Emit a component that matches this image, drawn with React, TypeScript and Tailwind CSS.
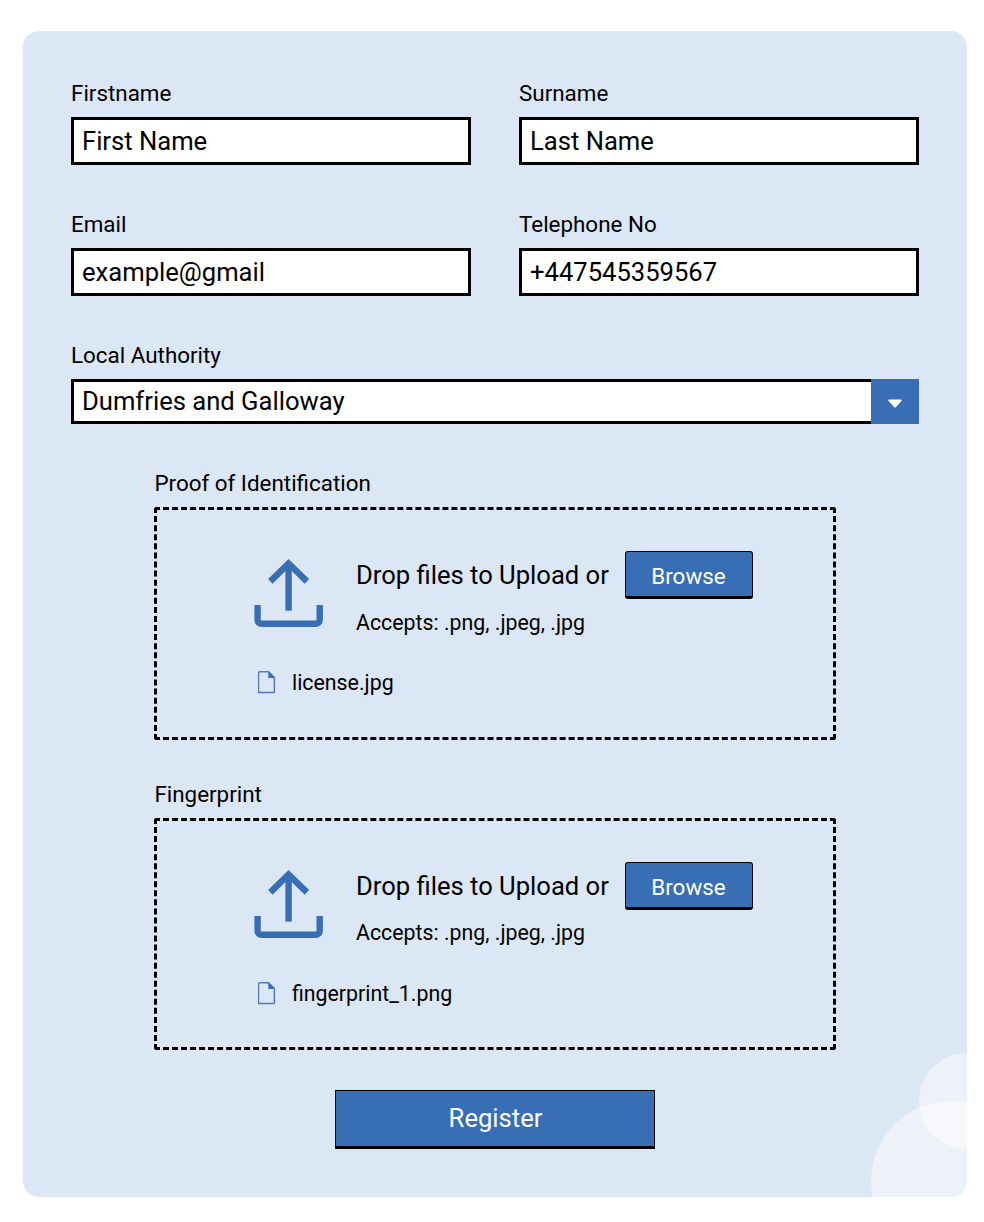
import React from "react";

function Label({ children }: { children: React.ReactNode }) {
  return <span className="block h-[27px] text-[22.4px] leading-[27px] whitespace-nowrap">{children}</span>;
}

function Field({ label, value, type = "text" }: { label: string; value: string; type?: string }) {
  return (
    <label className="flex flex-col gap-2.5">
      <Label>{label}</Label>
      <input
        type={type}
        defaultValue={value}
        className="h-12 w-full border-[3px] border-black bg-white px-2 text-[25.6px] leading-[30px] outline-none"
      />
    </label>
  );
}

function UploadIcon() {
  return (
    <svg width="69" height="69" viewBox="0 0 69 69" fill="none" stroke="#386eb4" strokeWidth="6.4" className="mt-[49px] shrink-0">
      <path d="M34.6 51.7V5" />
      <path d="M16.3 22.4 34.6 4.5 52.9 22.4" />
      <path d="M3.6 46v14.8a4 4 0 0 0 4 4h54.1a4 4 0 0 0 4-4V46" />
    </svg>
  );
}

function FileIcon() {
  return (
    <svg width="18" height="23" viewBox="0 0 18 23" fill="none" className="-mt-0.5 shrink-0">
      <path
        d="M1.4.8h9.2l5.8 5.8v14.1a.9.9 0 0 1-.9.9H1.4a.9.9 0 0 1-.9-.9V1.7a.9.9 0 0 1 .9-.9Z"
        stroke="#5478ba"
        strokeWidth="1.5"
      />
      <path d="M10.3.6v6.4h6.6Z" fill="#386eb4" />
    </svg>
  );
}

interface UploadProps {
  label: string;
  file: string;
  boxClass: string;
  hintClass: string;
}

function Upload({ label, file, boxClass, hintClass }: UploadProps) {
  return (
    <section className="flex flex-col gap-2.5">
      <Label>{label}</Label>
      <div className={`flex flex-col rounded-[3px] border-[3px] border-dashed border-black pl-[97px] ${boxClass}`}>
        <div className="flex">
          <UploadIcon />
          <div className="ml-[32.6px] pt-[41px]">
            <div className="flex h-12 items-center gap-4">
              <span className="w-[253px] text-[25.6px] leading-[48px] whitespace-nowrap">Drop files to Upload or</span>
              <button className="h-12 w-32 rounded-[3px] border border-b-[3px] border-black bg-[#386eb4] pt-[5px] pr-px text-[22.4px] leading-[27px] text-white">
                Browse
              </button>
            </div>
            <p className={`text-[21.33px] leading-6 ${hintClass}`}>Accepts: .png, .jpeg, .jpg</p>
          </div>
        </div>
        <div className="mt-[36px] ml-[3.8px] flex h-6 items-center gap-[15.8px]">
          <FileIcon />
          <span className="text-[21.33px] leading-6">{file}</span>
        </div>
      </div>
    </section>
  );
}

export default function App() {
  return (
    <main className="h-[1222px] w-[984px] bg-white pt-[31px] pl-[23px] text-black [font-family:Roboto,'Liberation_Sans',sans-serif]">
      <form
        onSubmit={(e) => e.preventDefault()}
        className="relative flex h-[1166px] w-[944px] flex-col overflow-hidden rounded-2xl bg-[#dbe7f5] px-12 pt-[49px]"
      >
        <div className="grid grid-cols-2 gap-x-12 gap-y-[46px]">
          <Field label="Firstname" value="First Name" />
          <Field label="Surname" value="Last Name" />
          <Field label="Email" value="example@gmail" />
          <Field label="Telephone No" value="+447545359567" type="tel" />
        </div>

        <div className="mt-[46px] flex flex-col gap-2.5">
          <Label>Local Authority</Label>
          <div className="flex h-[45px]">
            <div className="flex flex-1 items-center border-[3px] border-r-0 border-black bg-white px-2 pb-0.5 text-[25.6px] leading-[30px]">
              Dumfries and Galloway
            </div>
            <button className="flex w-12 items-center justify-center bg-[#386eb4]" aria-label="Open list">
              <svg width="14" height="9" viewBox="0 0 14 9" className="mt-[3px]">
                <path d="M1.2.5h11.6c1 0 1.2.9.7 1.6L8 8.1q-1 1-2 0L.5 2.1C0 1.4.2.5 1.2.5Z" fill="#fff" />
              </svg>
            </button>
          </div>
        </div>

        <div className="mt-[46px] ml-[83.4px] flex w-[681.4px] flex-col gap-[41px]">
          <Upload label="Proof of Identification" file="license.jpg" boxClass="h-[233px]" hintClass="mt-3" />
          <Upload label="Fingerprint" file="fingerprint_1.png" boxClass="h-[232px]" hintClass="mt-[11px] mb-px" />
        </div>

        <button className="mt-10 h-[59px] w-80 shrink-0 self-center border border-b-[3px] border-black bg-[#386eb4] pb-0.5 pl-px text-[25.6px] leading-[30px] text-white">
          Register
        </button>

        <span className="absolute top-[1022px] left-[896px] size-24 rounded-full bg-[#fffdfe80]" />
        <span className="absolute top-[1070px] left-[848px] size-40 rounded-full bg-[#fffdfe80]" />
      </form>
    </main>
  );
}
